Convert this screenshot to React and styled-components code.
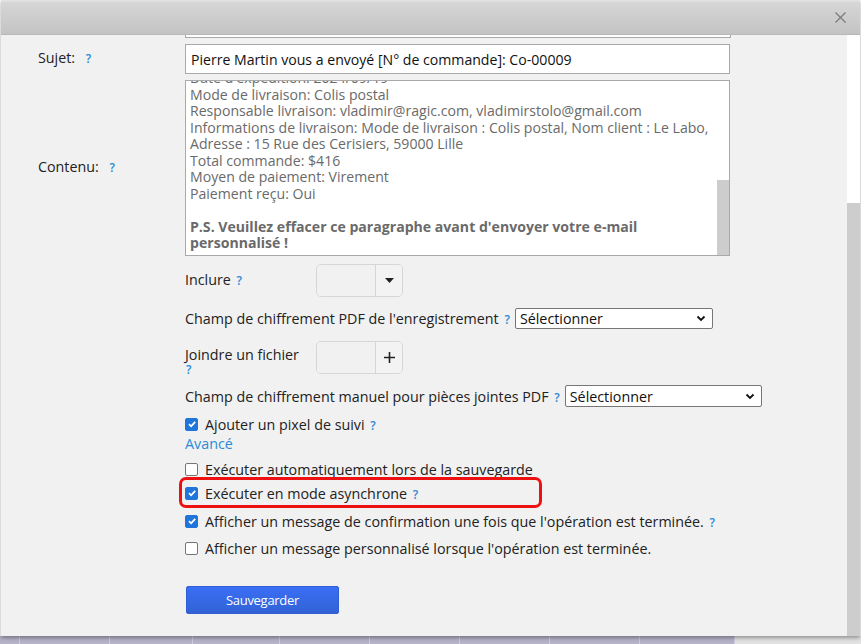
import styled, { createGlobalStyle } from "styled-components";

const GlobalStyle = createGlobalStyle`
  html, body {
    margin: 0;
    padding: 0;
    background: #ffffff;
    overflow: hidden;
  }
  body {
    font-family: "Open Sans", "Noto Sans", Arial, sans-serif;
    font-size: 14.3px;
    color: #333;
  }
`;

const contentLines = [
  "Date d'expédition: 2024/09/19",
  "Mode de livraison: Colis postal",
  "Responsable livraison: vladimir@ragic.com, vladimirstolo@gmail.com",
  "Informations de livraison: Mode de livraison : Colis postal, Nom client : Le Labo,",
  "Adresse : 15 Rue des Cerisiers, 59000 Lille",
  "Total commande: $416",
  "Moyen de paiement: Virement",
  "Paiement reçu: Oui",
  "",
];

const checkRows = [
  { text: "Exécuter automatiquement lors de la sauvegarde", checked: false, help: false, gap: 5 },
  { text: "Exécuter en mode asynchrone", checked: true, help: true, gap: 4, highlight: true },
  { text: "Afficher un message de confirmation une fois que l'opération est terminée.", checked: true, help: true, gap: 8 },
  { text: "Afficher un message personnalisé lorsque l'opération est terminée.", checked: false, help: false, gap: 7 },
];

const backdropCells = [20, 90, 83, 87, 90, 90, 90, 90, 95, 200];

const Help = ({ wide, block }) => (
  <HelpMark $wide={wide} $block={block}>
    ?
  </HelpMark>
);

const Check = ({ checked }) => (
  <CheckBox $checked={checked}>
    {checked && (
      <svg width="10" height="10" viewBox="0 0 10 10">
        <path d="M2 5.2 L4.1 7.3 L8.2 2.8" fill="none" stroke="#fff" strokeWidth="1.8" />
      </svg>
    )}
  </CheckBox>
);

const SelectBox = ({ width }) => (
  <FakeSelect $width={width}>
    <span>Sélectionner</span>
    <svg width="10" height="7" viewBox="0 0 10 7">
      <path d="M1.5 1.5 L5 5 L8.5 1.5" fill="none" stroke="#111" strokeWidth="1.8" />
    </svg>
  </FakeSelect>
);

const App = () => (
  <Page>
    <GlobalStyle />
    <Dialog>
      <Header>
        <CloseButton>
          <svg width="11" height="11" viewBox="0 0 11 11">
            <path d="M0.5 0.5 L10.5 10.5 M10.5 0.5 L0.5 10.5" stroke="#7a7a7a" strokeWidth="1.2" />
          </svg>
        </CloseButton>
      </Header>
      <Body>
        <Content>
          <PrevField />
          <FormRow $top={6}>
            <Label>
              Sujet: <Help wide />
            </Label>
            <TextInput>Pierre Martin vous a envoyé [N° de commande]: Co-00009</TextInput>
          </FormRow>
          <FormRow $top={6}>
            <Label>
              Contenu: <Help wide />
            </Label>
            <TextArea>
              <TextAreaBody>
                <TextLines>
                  {contentLines.map((line, i) => (
                    <Line key={i}>{line || "\u00a0"}</Line>
                  ))}
                  <Line $bold>P.S. Veuillez effacer ce paragraphe avant d'envoyer votre e-mail</Line>
                  <Line $bold>personnalisé !</Line>
                </TextLines>
              </TextAreaBody>
              <InnerTrack>
                <InnerThumb />
              </InnerTrack>
            </TextArea>
          </FormRow>

          <Options>
            <OptionRow $gap={8} $height={33}>
              <OptionLabel>
                Inclure <Help />
              </OptionLabel>
              <Picker>
                <PickerField />
                <PickerButton>
                  <svg width="9" height="5" viewBox="0 0 9 5">
                    <path d="M0 0 H9 L4.5 5 Z" fill="#222" />
                  </svg>
                </PickerButton>
              </Picker>
            </OptionRow>

            <OptionRow $gap={11} $height={21}>
              <InlineText>
                Champ de chiffrement PDF de l'enregistrement <Help />
              </InlineText>
              <SelectBox width={198} />
            </OptionRow>

            <OptionRow $gap={12} $height={33}>
              <OptionLabel $wrap>
                Joindre un fichier
                <Help block />
              </OptionLabel>
              <Picker>
                <PickerField />
                <PickerButton>
                  <svg width="11" height="11" viewBox="0 0 11 11">
                    <path d="M5.5 0 V11 M0 5.5 H11" stroke="#222" strokeWidth="1.6" />
                  </svg>
                </PickerButton>
              </Picker>
            </OptionRow>

            <OptionRow $gap={11} $height={22}>
              <InlineText>
                Champ de chiffrement manuel pour pièces jointes PDF <Help />
              </InlineText>
              <SelectBox width={197} />
            </OptionRow>

            <CheckRow $gap={7}>
              <Check checked />
              <span>
                Ajouter un pixel de suivi <Help />
              </span>
            </CheckRow>
            <AdvancedLink>Avancé</AdvancedLink>

            {checkRows.map((row) => (
              <CheckRow key={row.text} $gap={row.gap} $highlight={row.highlight}>
                <Check checked={row.checked} />
                <span>
                  {row.text} {row.help && <Help />}
                </span>
              </CheckRow>
            ))}

            <SaveButton type="button">Sauvegarder</SaveButton>
          </Options>
        </Content>
        <PageTrack>
          <PageThumb />
        </PageTrack>
      </Body>
    </Dialog>
    <Backdrop>
      {backdropCells.map((w, i) => (
        <BackdropCell key={i} style={{ width: w }} $light={i === backdropCells.length - 1} />
      ))}
    </Backdrop>
  </Page>
);

export default App;

// Styled Components
const Page = styled.div`
  width: 861px;
  height: 644px;
  display: flex;
  flex-direction: column;
  background: #ffffff;
`;

const Dialog = styled.div`
  margin: 0 1px 0 1px;
  height: 636px;
  display: flex;
  flex-direction: column;
  background: #f1f1f1;
  box-shadow: 0 2px 4px rgba(0, 0, 0, 0.35);
  position: relative;
  z-index: 1;
`;

const Header = styled.div`
  height: 35px;
  flex-shrink: 0;
  display: flex;
  align-items: center;
  justify-content: flex-end;
  padding-right: 14px;
  background: linear-gradient(#e4e4e4 0, #d6d6d6 8%, #c3c3c3 100%);
  border-bottom: 1px solid #b8b8b8;
  box-sizing: border-box;
`;

const CloseButton = styled.div`
  display: flex;
  align-items: center;
  cursor: pointer;
`;

const Body = styled.div`
  flex: 1;
  display: flex;
  min-height: 0;
`;

const Content = styled.div`
  flex: 1;
  padding-left: 37px;
  overflow: hidden;
`;

const PageTrack = styled.div`
  width: 13px;
  display: flex;
  flex-direction: column;
  justify-content: flex-end;
  background: #ffffff;
`;

const PageThumb = styled.div`
  height: 433px;
  background: #cdcdcd;
`;

const PrevField = styled.div`
  margin-left: 147px;
  width: 544px;
  height: 2px;
  border: 1px solid #a9a9a9;
  border-top: none;
  background: #fff;
`;

const FormRow = styled.div`
  display: grid;
  grid-template-columns: 147px 545px;
  align-items: center;
  margin-top: ${(p) => p.$top}px;
`;

const Label = styled.div`
  color: #222;
  padding-bottom: 3px;
`;

const HelpMark = styled.span`
  color: #2a8bd6;
  font-size: 12px;
  font-weight: 600;
  display: ${(p) => (p.$block ? "block" : "inline")};
  line-height: ${(p) => (p.$block ? "14px" : "inherit")};
  margin-left: ${(p) => (p.$wide ? "7px" : p.$block ? "1px" : "2px")};
`;

const TextInput = styled.div`
  height: 30px;
  box-sizing: border-box;
  border: 1px solid #a9a9a9;
  background: #fff;
  padding: 0 5px;
  display: flex;
  align-items: center;
  color: #111;
  font-size: 14.1px;
  white-space: nowrap;
`;

const TextArea = styled.div`
  height: 176px;
  box-sizing: border-box;
  border: 1px solid #a9a9a9;
  background: #fff;
  display: flex;
  overflow: hidden;
`;

const TextAreaBody = styled.div`
  flex: 1;
  overflow: hidden;
  padding: 0 4px;
`;

const TextLines = styled.div`
  margin-top: -11px;
`;

const Line = styled.div`
  color: #6a6a6a;
  font-size: 14.1px;
  line-height: 16.5px;
  white-space: nowrap;
  font-weight: ${(p) => (p.$bold ? 700 : 400)};
`;

const InnerTrack = styled.div`
  width: 12px;
  display: flex;
  flex-direction: column;
  justify-content: flex-end;
`;

const InnerThumb = styled.div`
  height: 75px;
  background: #cdcdcd;
`;

const Options = styled.div`
  margin-left: 147px;
  display: flex;
  flex-direction: column;
  align-items: flex-start;
`;

const OptionRow = styled.div`
  display: flex;
  align-items: center;
  height: ${(p) => p.$height}px;
  margin-top: ${(p) => p.$gap}px;
  color: #222;
`;

const OptionLabel = styled.div`
  width: 131px;
  line-height: 16px;
  align-self: ${(p) => (p.$wrap ? "flex-start" : "center")};
  padding-top: ${(p) => (p.$wrap ? "6px" : "0")};
  box-sizing: border-box;
`;

const InlineText = styled.span`
  margin-right: 5px;
  white-space: nowrap;
`;

const Picker = styled.div`
  width: 87px;
  height: 33px;
  box-sizing: border-box;
  display: flex;
  border: 1px solid #d6d6d6;
  border-radius: 5px;
  overflow: hidden;
`;

const PickerField = styled.div`
  flex: 1;
  background: #f1f1f1;
`;

const PickerButton = styled.div`
  width: 26px;
  border-left: 1px solid #d6d6d6;
  display: flex;
  align-items: center;
  justify-content: center;
  background: #f3f3f3;
`;

const FakeSelect = styled.div`
  width: ${(p) => p.$width}px;
  height: 100%;
  box-sizing: border-box;
  border: 1px solid #767676;
  border-radius: 2px;
  background: #fff;
  display: flex;
  align-items: center;
  justify-content: space-between;
  padding: 0 6px 0 4px;
  color: #111;
`;

const CheckRow = styled.div`
  position: relative;
  display: flex;
  align-items: center;
  gap: 7px;
  height: 20px;
  margin-top: ${(p) => p.$gap}px;
  color: #222;
  white-space: nowrap;

  &::after {
    content: "";
    display: ${(p) => (p.$highlight ? "block" : "none")};
    position: absolute;
    left: -6px;
    top: -6px;
    width: 363px;
    height: 31px;
    box-sizing: border-box;
    border: 3px solid #ee1111;
    border-radius: 7px;
  }
`;

const CheckBox = styled.span`
  width: 13px;
  height: 13px;
  box-sizing: border-box;
  border-radius: 2px;
  display: inline-flex;
  align-items: center;
  justify-content: center;
  border: 1px solid ${(p) => (p.$checked ? "#1f75d9" : "#767676")};
  background: ${(p) => (p.$checked ? "#1f75d9" : "#fff")};
  flex-shrink: 0;
`;

const AdvancedLink = styled.a`
  color: #2a8bd6;
  line-height: 20px;
  cursor: pointer;
`;

const SaveButton = styled.button`
  margin-top: 28px;
  margin-left: 1px;
  width: 153px;
  height: 28px;
  border: 1px solid #2f5fd0;
  border-radius: 2px;
  background: linear-gradient(#3a6ef5, #3163d6);
  color: #fff;
  font-family: "Open Sans", Arial, sans-serif;
  font-size: 13px;
  letter-spacing: -0.3px;
  cursor: pointer;
`;

const Backdrop = styled.div`
  height: 8px;
  display: flex;
  background: #b6b3c9;
`;

const BackdropCell = styled.div`
  height: 100%;
  box-sizing: border-box;
  border-right: 1px solid #cfcde0;
  background: ${(p) => (p.$light ? "#e2e2e2" : "#b6b3c9")};
  flex-shrink: 0;
`;
